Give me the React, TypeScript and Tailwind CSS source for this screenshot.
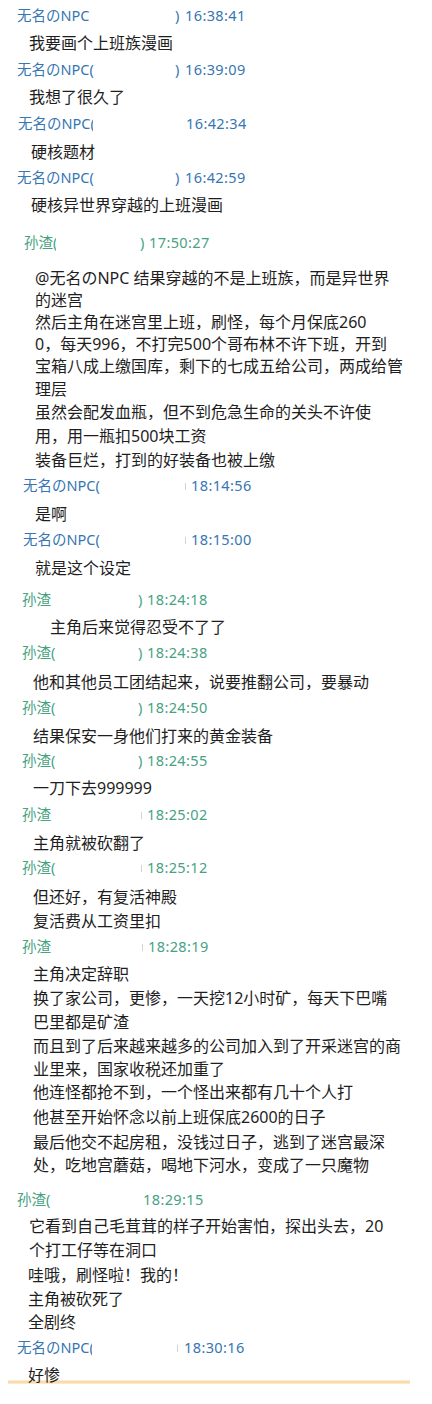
import React from "react";

const FONT = { fontFamily: '"Noto Sans", "Noto Sans CJK SC", sans-serif' };

type H = {
  k: "h";
  h: string;
  pl: string;
  name: string;
  partial?: boolean;
  nw: string;
  mark: ")" | "tick" | "";
  mw: string;
  time: string;
  c: "npc" | "sun";
};
type T = { k: "t"; h: string; pl: string; text: string };
type Row = H | T;

const NPC = "无名のNPC";
const SUN = "孙渣";

const rows: Row[] = [
  { k: "h", h: "h-[28px]", pl: "pl-[17px]", name: NPC, nw: "w-[158px]", mark: ")", mw: "w-[10px]", time: "16:38:41", c: "npc" },
  { k: "t", h: "h-[26px]", pl: "pl-[29px]", text: "我要画个上班族漫画" },
  { k: "h", h: "h-[28px]", pl: "pl-[17px]", name: NPC + "(", nw: "w-[158px]", mark: ")", mw: "w-[10px]", time: "16:39:09", c: "npc" },
  { k: "t", h: "h-[26px]", pl: "pl-[29px]", text: "我想了很久了" },
  { k: "h", h: "h-[29px]", pl: "pl-[18px]", name: NPC, partial: true, nw: "w-[168px]", mark: "", mw: "w-0", time: "16:42:34", c: "npc" },
  { k: "t", h: "h-[25px]", pl: "pl-[31px]", text: "硬核题材" },
  { k: "h", h: "h-[28px]", pl: "pl-[17px]", name: NPC + "(", nw: "w-[158px]", mark: ")", mw: "w-[10px]", time: "16:42:59", c: "npc" },
  { k: "t", h: "h-[37px]", pl: "pl-[31px]", text: "硬核异世界穿越的上班漫画" },
  { k: "h", h: "h-[36px]", pl: "pl-[24px]", name: SUN, partial: true, nw: "w-[116px]", mark: ")", mw: "w-[9px]", time: "17:50:27", c: "sun" },
  { k: "t", h: "h-[22px]", pl: "pl-[35px]", text: "@无名のNPC 结果穿越的不是上班族，而是异世界" },
  { k: "t", h: "h-[22px]", pl: "pl-[35px]", text: "的迷宫" },
  { k: "t", h: "h-[22px]", pl: "pl-[35px]", text: "然后主角在迷宫里上班，刷怪，每个月保底260" },
  { k: "t", h: "h-[22px]", pl: "pl-[35px]", text: "0，每天996，不打完500个哥布林不许下班，开到" },
  { k: "t", h: "h-[23px]", pl: "pl-[35px]", text: "宝箱八成上缴国库，剩下的七成五给公司，两成给管" },
  { k: "t", h: "h-[23px]", pl: "pl-[35px]", text: "理层" },
  { k: "t", h: "h-[24px]", pl: "pl-[35px]", text: "虽然会配发血瓶，但不到危急生命的关头不许使" },
  { k: "t", h: "h-[24px]", pl: "pl-[35px]", text: "用，用一瓶扣500块工资" },
  { k: "t", h: "h-[25px]", pl: "pl-[35px]", text: "装备巨烂，打到的好装备也被上缴" },
  { k: "h", h: "h-[29px]", pl: "pl-[23px]", name: NPC + "(", nw: "w-[162px]", mark: "tick", mw: "w-[6px]", time: "18:14:56", c: "npc" },
  { k: "t", h: "h-[25px]", pl: "pl-[35px]", text: "是啊" },
  { k: "h", h: "h-[29px]", pl: "pl-[23px]", name: NPC + "(", nw: "w-[162px]", mark: "tick", mw: "w-[6px]", time: "18:15:00", c: "npc" },
  { k: "t", h: "h-[31px]", pl: "pl-[35px]", text: "就是这个设定" },
  { k: "h", h: "h-[28px]", pl: "pl-[22px]", name: SUN, nw: "w-[116px]", mark: ")", mw: "w-[9px]", time: "18:24:18", c: "sun" },
  { k: "t", h: "h-[25px]", pl: "pl-[50px]", text: "主角后来觉得忍受不了了" },
  { k: "h", h: "h-[30px]", pl: "pl-[22px]", name: SUN + "(", nw: "w-[116px]", mark: ")", mw: "w-[9px]", time: "18:24:38", c: "sun" },
  { k: "t", h: "h-[25px]", pl: "pl-[33px]", text: "他和其他员工团结起来，说要推翻公司，要暴动" },
  { k: "h", h: "h-[29px]", pl: "pl-[22px]", name: SUN + "(", nw: "w-[116px]", mark: ")", mw: "w-[9px]", time: "18:24:50", c: "sun" },
  { k: "t", h: "h-[24px]", pl: "pl-[33px]", text: "结果保安一身他们打来的黄金装备" },
  { k: "h", h: "h-[28px]", pl: "pl-[22px]", name: SUN + "(", nw: "w-[116px]", mark: ")", mw: "w-[9px]", time: "18:24:55", c: "sun" },
  { k: "t", h: "h-[26px]", pl: "pl-[33px]", text: "一刀下去999999" },
  { k: "h", h: "h-[29px]", pl: "pl-[22px]", name: SUN, nw: "w-[119px]", mark: "tick", mw: "w-[6px]", time: "18:25:02", c: "sun" },
  { k: "t", h: "h-[24px]", pl: "pl-[33px]", text: "主角就被砍翻了" },
  { k: "h", h: "h-[30px]", pl: "pl-[22px]", name: SUN + "(", nw: "w-[119px]", mark: "tick", mw: "w-[6px]", time: "18:25:12", c: "sun" },
  { k: "t", h: "h-[24px]", pl: "pl-[33px]", text: "但还好，有复活神殿" },
  { k: "t", h: "h-[25px]", pl: "pl-[33px]", text: "复活费从工资里扣" },
  { k: "h", h: "h-[28px]", pl: "pl-[22px]", name: SUN, nw: "w-[120px]", mark: "tick", mw: "w-[6px]", time: "18:28:19", c: "sun" },
  { k: "t", h: "h-[24px]", pl: "pl-[33px]", text: "主角决定辞职" },
  { k: "t", h: "h-[24px]", pl: "pl-[33px]", text: "换了家公司，更惨，一天挖12小时矿，每天下巴嘴" },
  { k: "t", h: "h-[24px]", pl: "pl-[33px]", text: "巴里都是矿渣" },
  { k: "t", h: "h-[23px]", pl: "pl-[33px]", text: "而且到了后来越来越多的公司加入到了开采迷宫的商" },
  { k: "t", h: "h-[23px]", pl: "pl-[33px]", text: "业里来，国家收税还加重了" },
  { k: "t", h: "h-[25px]", pl: "pl-[33px]", text: "他连怪都抢不到，一个怪出来都有几十个人打" },
  { k: "t", h: "h-[25px]", pl: "pl-[33px]", text: "他甚至开始怀念以前上班保底2600的日子" },
  { k: "t", h: "h-[23px]", pl: "pl-[33px]", text: "最后他交不起房租，没钱过日子，逃到了迷宫最深" },
  { k: "t", h: "h-[34px]", pl: "pl-[33px]", text: "处，吃地宫蘑菇，喝地下河水，变成了一只魔物" },
  { k: "h", h: "h-[27px]", pl: "pl-[17px]", name: SUN + "(", nw: "w-[126px]", mark: "", mw: "w-0", time: "18:29:15", c: "sun" },
  { k: "t", h: "h-[24px]", pl: "pl-[29px]", text: "它看到自己毛茸茸的样子开始害怕，探出头去，20" },
  { k: "t", h: "h-[25px]", pl: "pl-[29px]", text: "个打工仔等在洞口" },
  { k: "t", h: "h-[24px]", pl: "pl-[28px]", text: "哇哦，刷怪啦！我的！" },
  { k: "t", h: "h-[23px]", pl: "pl-[28px]", text: "主角被砍死了" },
  { k: "t", h: "h-[25px]", pl: "pl-[28px]", text: "全剧终" },
  { k: "h", h: "h-[28px]", pl: "pl-[17px]", name: NPC, partial: true, nw: "w-[160px]", mark: "tick", mw: "w-[7px]", time: "18:30:16", c: "npc" },
  { k: "t", h: "h-[14px]", pl: "pl-[28px]", text: "好惨" },
];

function Header({ r }: { r: H }) {
  const color = r.c === "npc" ? "text-[#3676b2]" : "text-[#47a282]";
  return (
    <div className={`${r.h} ${r.pl} flex items-start leading-[18px] text-[14.5px] ${color}`}>
      <div className={`${r.nw} shrink-0 flex whitespace-nowrap`}>
        <span>{r.name}</span>
        {r.partial && <span className="inline-block w-[3px] overflow-hidden">(</span>}
      </div>
      <div className={`${r.mw} shrink-0 flex items-center h-[18px]`}>
        {r.mark === ")" && <span>)</span>}
        {r.mark === "tick" && <span className="block w-px h-[7px] mt-[3px] bg-[#c9d6e0]" />}
      </div>
      <span className="whitespace-nowrap tracking-[0.4px]">{r.time}</span>
    </div>
  );
}

function Text({ r }: { r: T }) {
  return (
    <div className={`${r.h} ${r.pl} leading-[18px] text-[16px] text-[#1e1e1e] whitespace-nowrap`}>
      {r.text}
    </div>
  );
}

export default function App() {
  return (
    <div className="w-[432px] h-[1404px] bg-white overflow-hidden pt-[6px]" style={FONT}>
      {rows.map((r, i) =>
        r.k === "h" ? <Header key={i} r={r} /> : <Text key={i} r={r} />
      )}
      <div className="ml-[8px] w-[402px] h-[4px] bg-gradient-to-b from-[#fdf2de] via-[#f7d59e] to-[#fcefd8]" />
    </div>
  );
}
